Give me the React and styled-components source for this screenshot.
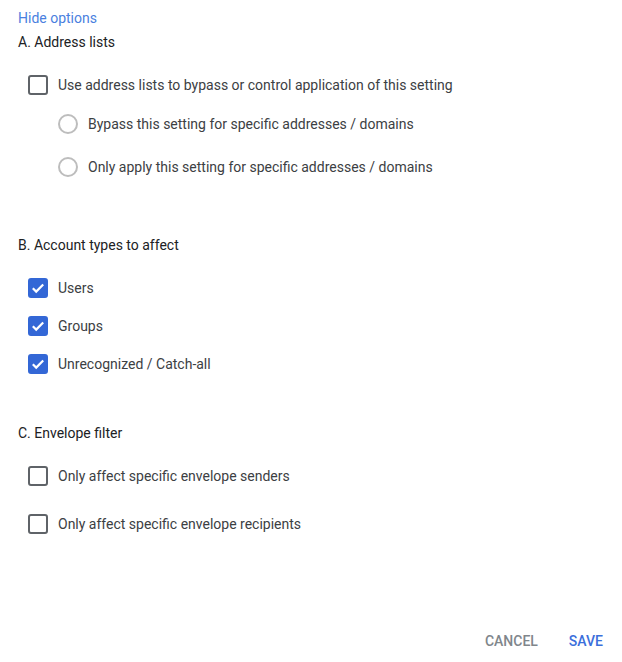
import React, { useState } from 'react';
import styled, { createGlobalStyle } from 'styled-components';

/** Global styles. */

const GlobalStyle = createGlobalStyle`
	html, body {
		margin: 0;
		padding: 0;
		background: #fff;
	}
	body {
		font-family: Roboto, 'Liberation Sans', Arial, sans-serif;
		font-size: 14px;
		color: #202124;
	}
`;

/** Module styles. */

const Page = styled.div`
	width: 622px;
	height: 662px;
	box-sizing: border-box;
	padding: 8px 0 0 18px;
	display: flex;
	flex-direction: column;
`;

const ToggleLink = styled.a`
	color: #4a7fe0;
	line-height: 20px;
	cursor: pointer;
	align-self: flex-start;
`;

const SectionTitle = styled.div`
	line-height: 20px;
	margin-top: ${props => props.gap}px;
`;

const Row = styled.label`
	display: flex;
	align-items: center;
	height: 20px;
	margin-top: ${props => props.gap}px;
	margin-left: ${props => props.indent}px;
	gap: 10px;
	cursor: pointer;
	color: #3c4043;
`;

const Box = styled.span`
	width: 20px;
	height: 20px;
	box-sizing: border-box;
	border-radius: 3px;
	border: 2px solid ${props => (props.checked ? '#3367d6' : '#5f6368')};
	background: ${props => (props.checked ? '#3367d6' : '#fff')};
	display: flex;
	align-items: center;
	justify-content: center;
	flex: none;
`;

const Radio = styled.span`
	width: 20px;
	height: 20px;
	box-sizing: border-box;
	border-radius: 50%;
	border: 2px solid #bdbdbd;
	flex: none;
`;

const Footer = styled.div`
	display: flex;
	justify-content: flex-end;
	gap: 31px;
	margin-top: 97px;
	padding-right: 19px;
`;

const TextButton = styled.button`
	background: transparent;
	border: 0;
	padding: 0;
	font-family: Roboto, 'Liberation Sans', Arial, sans-serif;
	font-size: 14px;
	font-weight: 500;
	line-height: 20px;
	text-transform: uppercase;
	color: ${props => (props.primary ? '#3b6fdb' : '#80868b')};
	cursor: pointer;
`;

function Checkbox({ label, checked, onToggle, gap, indent }) {
	return (
		<Row gap={gap} indent={indent} onClick={onToggle}>
			<Box checked={checked}>
				{checked && (
					<svg width="16" height="16" viewBox="0 0 16 16">
						<path d="M2.8 8.2l3.4 3.4 7-7.2" fill="none" stroke="#fff" strokeWidth="2.2" />
					</svg>
				)}
			</Box>
			{label}
		</Row>
	);
}

function RadioRow({ label, gap }) {
	return (
		<Row gap={gap} indent={40}>
			<Radio />
			{label}
		</Row>
	);
}

/* Function `App` page. */

function App() {
	const [values, setValues] = useState({
		lists: false,
		users: true,
		groups: true,
		unrecognized: true,
		senders: false,
		recipients: false,
	});

	const toggle = name => () =>
		setValues(prev => ({ ...prev, [name]: !prev[name] }));

	return (
		<Page>
			<GlobalStyle />
			<ToggleLink>Hide options</ToggleLink>
			<SectionTitle gap={4}>A. Address lists</SectionTitle>
			<Checkbox
				gap={23}
				indent={10}
				label="Use address lists to bypass or control application of this setting"
				checked={values.lists}
				onToggle={toggle('lists')}
			/>
			<RadioRow gap={19} label="Bypass this setting for specific addresses / domains" />
			<RadioRow gap={23} label="Only apply this setting for specific addresses / domains" />

			<SectionTitle gap={58}>B. Account types to affect</SectionTitle>
			<Checkbox gap={23} indent={10} label="Users" checked={values.users} onToggle={toggle('users')} />
			<Checkbox gap={18} indent={10} label="Groups" checked={values.groups} onToggle={toggle('groups')} />
			<Checkbox
				gap={18}
				indent={10}
				label="Unrecognized / Catch-all"
				checked={values.unrecognized}
				onToggle={toggle('unrecognized')}
			/>

			<SectionTitle gap={49}>C. Envelope filter</SectionTitle>
			<Checkbox
				gap={23}
				indent={10}
				label="Only affect specific envelope senders"
				checked={values.senders}
				onToggle={toggle('senders')}
			/>
			<Checkbox
				gap={28}
				indent={10}
				label="Only affect specific envelope recipients"
				checked={values.recipients}
				onToggle={toggle('recipients')}
			/>

			<Footer>
				<TextButton>Cancel</TextButton>
				<TextButton primary>Save</TextButton>
			</Footer>
		</Page>
	);
}

export default App;
